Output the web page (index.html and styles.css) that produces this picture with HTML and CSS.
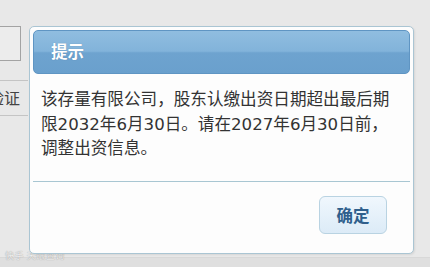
FILE: index.html
```html
<!DOCTYPE html>
<html lang="zh-CN">

<head>
  <meta charset="UTF-8" />
  <meta name="viewport" content="width=device-width, initial-scale=1.0" />
  <title>提示</title>
  <link rel="stylesheet" href="styles.css">
</head>

<body>
  <div class="page">
    <div class="form-col">
      <div class="field"></div>
      <div class="verify">验证</div>
    </div>
  </div>
  <div class="footer-bar"></div>
  <div class="watermark">快手 天眼查询</div>

  <div class="dialog">
    <div class="dialog-head">提示</div>
    <p class="dialog-text">该存量有限公司，股东认缴出资日期超出最后期<br>限2032年6月30日。请在2027年6月30日前，<br>调整出资信息。</p>
    <div class="dialog-foot">
      <button class="ok-button">确定</button>
    </div>
  </div>
</body>

</html>
```

FILE: styles.css
```css
body {
  margin: 0;
  height: 267px;
  overflow: hidden;
  background-color: #e8e8e8;
  font-family: "Noto Sans", "Noto Sans CJK SC", sans-serif;
  position: relative;
}

.page {
  height: 257px;
}

.form-col {
  width: 42px;
  margin-left: -21px;
  padding-top: 26px;
}

.field {
  height: 33px;
  border: 1px solid #a3a3a3;
  background-color: #ececec;
}

.verify {
  margin-top: 19px;
  height: 36px;
  width: 49px;
  box-sizing: border-box;
  padding-right: 8px;
  border-top: 1px solid #c4c4c4;
  border-bottom: 1px solid #c4c4c4;
  font-size: 16px;
  line-height: 34px;
  color: #444;
  text-align: right;
}

.footer-bar {
  height: 10px;
  background-color: #dfdfdf;
  border-top: 1px solid #d8d8d8;
}

.watermark {
  position: absolute;
  left: 5px;
  top: 249px;
  font-size: 9px;
  color: #eeeeee;
  text-shadow: 0 0 1px #888;
  letter-spacing: 0.5px;
}

.dialog {
  position: absolute;
  left: 29px;
  top: 26px;
  width: 377px;
  height: 220px;
  padding: 3px;
  border: 1px solid #aac5d3;
  border-radius: 5px;
  background-color: #fdfdfd;
  box-shadow: 1px 1px 2px rgba(0, 0, 0, 0.08);
}

.dialog-head {
  height: 42px;
  border: 1px solid #5f95c3;
  border-radius: 5px;
  background: linear-gradient(to bottom, #90bde0 0%, #82b3da 48%, #6ea3cf 52%, #6aa0cd 100%);
  color: #fff;
  font-size: 16.5px;
  font-weight: 700;
  line-height: 42px;
  padding-left: 17px;
  text-shadow: 0 0 1px rgba(40, 80, 120, 0.4);
}

.dialog-text {
  margin: 14px 0 0;
  padding: 0 8px;
  font-family: "DejaVu Sans", "Noto Sans CJK SC", sans-serif;
  font-size: 16.6px;
  line-height: 24.5px;
  color: #333;
  height: 78px;
  white-space: nowrap;
}

.dialog-foot {
  margin-top: 15px;
  border-top: 1px solid #a8c6d2;
  padding: 14px 23px 0 0;
  display: flex;
  justify-content: flex-end;
}

.ok-button {
  width: 68px;
  height: 38px;
  border: 1px solid #b9d3e2;
  border-radius: 6px;
  background: linear-gradient(to bottom, #f0f7fd 0%, #e6f1fa 50%, #dcebf7 100%);
  color: #2f5f8c;
  font-family: "Noto Sans", "Noto Sans CJK SC", sans-serif;
  font-size: 16.5px;
  font-weight: 700;
  padding: 0;
}
```
